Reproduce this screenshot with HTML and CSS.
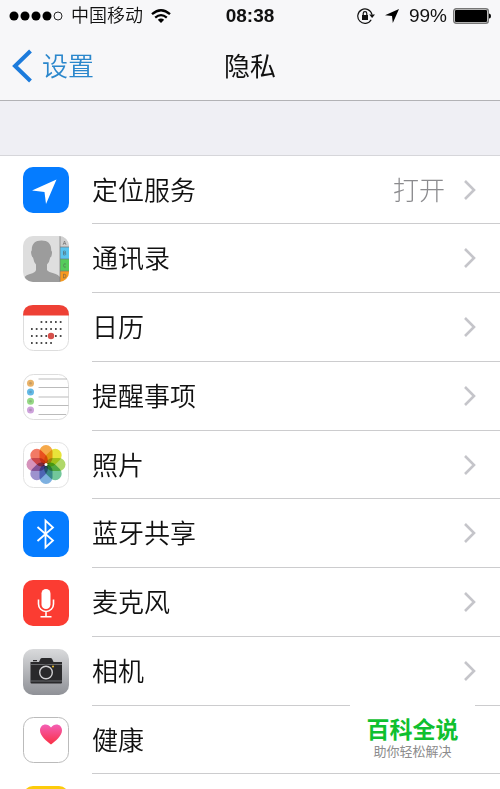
FILE: index.html
```html
<!DOCTYPE html>
<html lang="zh-CN">
<head>
<meta charset="utf-8">
<meta name="viewport" content="width=device-width, initial-scale=1">
<title>隐私</title>
<link rel="stylesheet" href="styles.css">
</head>
<body>
<div class="screen">
  <header class="top">
    <div class="status">
      <div class="status-left">
        <svg class="signal" width="54" height="10" viewBox="0 0 54 10" aria-hidden="true">
          <circle cx="5" cy="5" r="4.5"/><circle cx="16" cy="5" r="4.5"/><circle cx="27" cy="5" r="4.5"/><circle cx="38" cy="5" r="4.5"/>
          <circle cx="49" cy="5" r="4" fill="none" stroke="#111" stroke-width="0.9"/>
        </svg>
        <span class="carrier">中国移动</span>
        <svg width="20" height="14" viewBox="0 0 20 14" fill="none" stroke="#000" stroke-width="2.3" aria-hidden="true">
          <path d="M1 5.2Q10-2.8 19 5.2M4.2 8.6Q10 3.6 15.8 8.6"/>
          <path d="M6.8 10.8Q10 8 13.2 10.8L10 14Z" fill="#000" stroke="none"/>
        </svg>
      </div>
      <time class="clock">08:38</time>
      <div class="status-right">
        <svg width="18" height="16" viewBox="0 0 18 16" fill="none" stroke="#111" aria-hidden="true">
          <path d="M14.2 11.8A7.2 7.2 0 1 1 15 6.6" stroke-width="1.2"/>
          <path d="M12.2 6.6H18L15.1 10Z" fill="#111" stroke="none"/>
          <path d="M5 7H11V12H5Z" fill="#111" stroke="none"/>
          <path d="M6.2 7V5.4a1.8 1.8 0 0 1 3.6 0V7" stroke-width="1.2"/>
        </svg>
        <svg class="arrow" width="14" height="14" viewBox="0 0 14 14" aria-hidden="true"><path d="M14 0 7.8 14 7 7 0 6.2Z"/></svg>
        <span class="percent">99%</span>
        <svg width="38" height="16" viewBox="0 0 38 16" aria-hidden="true">
          <rect x="0.7" y="0.7" width="34.6" height="14.6" rx="2.5" fill="#eee" stroke="#777" stroke-width="1.4"/>
          <rect x="2" y="2" width="32" height="12" rx="1"/>
          <path d="M36 5.5q2 0 2 2.5t-2 2.5Z"/>
        </svg>
      </div>
    </div>
    <nav class="navbar">
      <button class="back" type="button">
        <svg width="20" height="34" viewBox="0 0 20 34" fill="none" stroke="#1c7bdc" stroke-width="4" aria-hidden="true"><path d="M18.5 2 3 17l15.5 15"/></svg>
        <span class="back-text">设置</span>
      </button>
      <h1 class="title">隐私</h1>
    </nav>
  </header>

  <main class="content">
    <ul class="list">
      <li class="row">
        <svg class="icon" viewBox="0 0 46 46" aria-hidden="true"><rect width="46" height="46" rx="10" fill="#057cff"/><path d="M33.5 12.5 23 37 21.500 25 9 23.500Z" fill="#fff"/></svg>
        <a class="link" href="#location"><span class="label">定位服务</span><span class="value">打开</span><svg class="chevron" viewBox="0 0 14 22" aria-hidden="true"><path d="m2 2 9 9-9 9"/></svg></a>
      </li>
      <li class="row">
        <svg class="icon" viewBox="0 0 46 46" aria-hidden="true">
          <clipPath id="tile"><rect width="46" height="46" rx="10"/></clipPath>
          <g clip-path="url(#tile)">
            <rect width="46" height="46" fill="#dedede"/>
            <path d="M18.500 4.500C12 4.500 8.500 8 8.800 14.500Q7.500 15 8.500 19q.5 2.300 1.500 2.500Q10.800 26 13 28.500V34q-.5 2.500-6 4-4.500 1-6 4V46H37V41q-2-2.500-5-3.300-7-1.700-8-3.700V28.500q2.500-2.500 3.200-7 1.300-.5 1.500-2.500.8-4-.5-4.500C28.500 8 25 4.500 18.500 4.500Z" fill="#9c9c9c"/>
            <rect x="37" width="9" height="11" fill="#d0d0d0"/>
            <rect x="37" y="11" width="9" height="12" fill="#5bc4ef"/>
            <rect x="37" y="23" width="9" height="12" fill="#56cc5b"/>
            <rect x="37" y="35" width="9" height="11" fill="#f79a1e"/>
            <path d="M37 0V46M37 11H46M37 23H46M37 35H46" stroke="#777" stroke-width="0.7"/>
            <g fill="none" stroke="#555" stroke-opacity=".6" stroke-width="0.8">
              <path d="m40 9 1.500-4L43 9M40.500 7.500h2M40.500 15v4h1.200q1.200 0 1.200-1t-1.200-1H40.500h1q1.200 0 1.200-1t-1.200-1ZM43 28q-2.500-1-2.500 1.500T43 31M40.500 38v4q2.500 0 2.500-2t-2.500-2Z"/>
            </g>
          </g>
        </svg>
        <a class="link" href="#contacts"><span class="label">通讯录</span><svg class="chevron" viewBox="0 0 14 22" aria-hidden="true"><path d="m2 2 9 9-9 9"/></svg></a>
      </li>
      <li class="row">
        <svg class="icon" viewBox="0 0 46 46" aria-hidden="true">
          <rect x=".5" y=".5" width="45" height="45" rx="10" fill="#fff" stroke="#ddd"/>
          <path d="M0 10.500Q0 0 10 0H36Q46 0 46 10.500Z" fill="#ee4035"/>
          <g stroke="#111" stroke-width="1.700" stroke-dasharray="1.700 3.100">
            <path d="M17.600 17H38.600M8 24H38.600M8 31H38.600M8 38H29"/>
          </g>
          <circle cx="28" cy="31" r="3.200" fill="#d5504b"/>
        </svg>
        <a class="link" href="#calendar"><span class="label">日历</span><svg class="chevron" viewBox="0 0 14 22" aria-hidden="true"><path d="m2 2 9 9-9 9"/></svg></a>
      </li>
      <li class="row">
        <svg class="icon" viewBox="0 0 46 46" aria-hidden="true">
          <rect x=".5" y=".5" width="45" height="45" rx="10" fill="#fff" stroke="#ddd"/>
          <path d="M15.500 5H44M15.500 13.500H45.500M15.500 23H45.500M15.500 31.500H45.500M15.500 40.500H43" stroke="#bbb"/>
          <circle cx="7.500" cy="9.200" r="3.500" fill="#e9b268"/><circle cx="7.500" cy="18" r="3.500" fill="#63b9e6"/><circle cx="7.500" cy="27.300" r="3.500" fill="#96d985"/><circle cx="7.500" cy="36" r="3.500" fill="#cea2dc"/>
          <g fill="#555" fill-opacity=".25"><circle cx="7.500" cy="9.200" r="1.300"/><circle cx="7.500" cy="18" r="1.300"/><circle cx="7.500" cy="27.300" r="1.300"/><circle cx="7.500" cy="36" r="1.300"/></g>
        </svg>
        <a class="link" href="#reminders"><span class="label">提醒事项</span><svg class="chevron" viewBox="0 0 14 22" aria-hidden="true"><path d="m2 2 9 9-9 9"/></svg></a>
      </li>
      <li class="row">
        <svg class="icon" viewBox="0 0 46 46" aria-hidden="true">
          <rect x=".5" y=".5" width="45" height="45" rx="10" fill="#fff" stroke="#e2e2e2"/>
          <g class="petals">
            <rect x="16.500" y="3" width="13" height="19.500" rx="6.500" fill="#f6a94a"/>
            <rect x="16.500" y="3" width="13" height="19.500" rx="6.500" fill="#e8e43a" transform="rotate(45 23 22.500)"/>
            <rect x="16.500" y="3" width="13" height="19.500" rx="6.500" fill="#b0d86a" transform="rotate(90 23 22.500)"/>
            <rect x="16.500" y="3" width="13" height="19.500" rx="6.500" fill="#72c79a" transform="rotate(135 23 22.500)"/>
            <rect x="16.500" y="3" width="13" height="19.500" rx="6.500" fill="#7db0e0" transform="rotate(180 23 22.500)"/>
            <rect x="16.500" y="3" width="13" height="19.500" rx="6.500" fill="#9d92ce" transform="rotate(225 23 22.500)"/>
            <rect x="16.500" y="3" width="13" height="19.500" rx="6.500" fill="#d693bb" transform="rotate(270 23 22.500)"/>
            <rect x="16.500" y="3" width="13" height="19.500" rx="6.500" fill="#f27a65" transform="rotate(315 23 22.500)"/>
          </g>
          <circle cx="23" cy="22.500" r="1.500" fill="#fff"/>
        </svg>
        <a class="link" href="#photos"><span class="label">照片</span><svg class="chevron" viewBox="0 0 14 22" aria-hidden="true"><path d="m2 2 9 9-9 9"/></svg></a>
      </li>
      <li class="row">
        <svg class="icon" viewBox="0 0 46 46" aria-hidden="true"><rect width="46" height="46" rx="10" fill="#057cff"/><path d="M14.500 16 30 29.500 22.500 36.500V9.500L30 16.500 14.500 30" fill="none" stroke="#fff" stroke-width="1.800"/></svg>
        <a class="link" href="#bluetooth"><span class="label">蓝牙共享</span><svg class="chevron" viewBox="0 0 14 22" aria-hidden="true"><path d="m2 2 9 9-9 9"/></svg></a>
      </li>
      <li class="row">
        <svg class="icon" viewBox="0 0 46 46" aria-hidden="true"><rect width="46" height="46" rx="10" fill="#fb3c32"/><rect x="18.500" y="9" width="9" height="20" rx="4.500" fill="#fff"/><path d="M15.500 19.500V24a7.500 7.500 0 0 0 15 0V19.500M23 31.500V36.500M17.500 36.700H28.500" fill="none" stroke="#fff" stroke-width="1.600"/></svg>
        <a class="link" href="#microphone"><span class="label">麦克风</span><svg class="chevron" viewBox="0 0 14 22" aria-hidden="true"><path d="m2 2 9 9-9 9"/></svg></a>
      </li>
      <li class="row">
        <svg class="icon" viewBox="0 0 46 46" aria-hidden="true">
          <linearGradient id="metal" x2="0" y2="1"><stop stop-color="#d9dadc"/><stop offset="1" stop-color="#8f9197"/></linearGradient>
          <rect width="46" height="46" rx="10" fill="url(#metal)"/>
          <path d="M7.500 13H16l1.500-3.200Q18 9 19 9h8.500q1 0 1.500.8L30.500 13H39V33.500q0 1-1 1H8.500q-1 0-1-1ZM10 11h4v1.200h-4Z" fill="#29292b"/>
          <path d="M7.500 15.500H39M7.500 32H39" stroke="#85868a" stroke-width=".7"/>
          <circle cx="23" cy="23.500" r="8" fill="#29292b"/><circle cx="23" cy="23.500" r="6.300" fill="none" stroke="#d0d0d2" stroke-width="1.400"/>
          <circle cx="30" cy="17.500" r="1" fill="#f3c52c"/>
        </svg>
        <a class="link" href="#camera"><span class="label">相机</span><svg class="chevron" viewBox="0 0 14 22" aria-hidden="true"><path d="m2 2 9 9-9 9"/></svg></a>
      </li>
      <li class="row">
        <svg class="icon" viewBox="0 0 46 46" aria-hidden="true">
          <linearGradient id="heart" x2="0" y2="1"><stop stop-color="#f45fb5"/><stop offset="1" stop-color="#fa3044"/></linearGradient>
          <rect x=".5" y=".5" width="45" height="45" rx="10" fill="#fff" stroke="#bbb"/>
          <path d="M28 27.500C24 24.500 17 19 17 13.500 17 7 24.500 5.500 28 10.500 31.500 5.500 39 7 39 13.500 39 19 32 24.500 28 27.500Z" fill="url(#heart)"/>
        </svg>
        <a class="link" href="#health"><span class="label">健康</span></a>
      </li>
      <li class="row">
        <svg class="icon" viewBox="0 0 46 46" aria-hidden="true"><rect width="46" height="46" rx="10" fill="#fccb0b"/></svg>
      </li>
    </ul>
  </main>

  <aside class="badge">
    <strong class="badge-name">百科全说</strong>
    <span class="badge-tag">助你轻松解决</span>
  </aside>
</div>
</body>
</html>
```
FILE: styles.css
```css
* { box-sizing: border-box; }

body {
  margin: 0;
  background: #fff;
  color: #111;
  font-family: "Liberation Sans", "Noto Sans CJK SC", sans-serif;
}

.screen {
  position: relative;
  display: flex;
  flex-direction: column;
  height: 100vh;
  overflow: hidden;
}

.top {
  flex: none;
  background: #f7f7f9;
  border-bottom: 1px solid #b2b2b5;
}

.status,
.navbar {
  display: grid;
  grid-template-columns: 1fr auto 1fr;
  align-items: center;
}

.status {
  height: 32px;
  padding: 0 9px;
  font-size: 19px;
}

.status-left,
.status-right {
  display: flex;
  align-items: center;
}

.status-left { gap: 8px; }
.status-right { justify-content: flex-end; gap: 6px; }
.arrow { margin: 0 4px; }

.carrier {
  font-size: 18px;
  font-weight: 350;
  line-height: 24px;
}

.clock {
  font-weight: bold;
  line-height: 24px;
}

.percent { line-height: 24px; }

.navbar {
  height: 68px;
  padding: 0 12px;
}

.back {
  display: flex;
  align-items: center;
  gap: 10px;
  justify-self: start;
  padding: 0;
  border: 0;
  background: none;
  color: #2b87cc;
  font-family: inherit;
  font-size: 26px;
  font-weight: 350;
  line-height: 36px;
}

.title {
  margin: 0;
  font-size: 26px;
  font-weight: 400;
  line-height: 36px;
}

.back-text,
.title,
.label,
.value { padding-top: 2px; }

.content {
  flex: 1;
  min-height: 0;
  padding-top: 54px;
  background: #efeff4;
}

.list {
  margin: 0;
  padding: 0;
  list-style: none;
  background: #fff;
  border-top: 1px solid #d6d6da;
}

.row {
  display: flex;
  align-items: center;
  gap: 23px;
  height: 69px;
  padding-left: 23px;
}

.row:nth-child(4n + 1) { height: 68px; }

.icon {
  flex: none;
  width: 46px;
  height: 46px;
}

.petals rect { mix-blend-mode: multiply; }

.link {
  display: flex;
  flex: 1;
  align-items: center;
  align-self: stretch;
  padding-right: 23px;
  border-bottom: 1px solid #ccccce;
  color: inherit;
  font-size: 26px;
  font-weight: 350;
  line-height: 36px;
  text-decoration: none;
}

.label { flex: 1; }

.value {
  margin-right: 18px;
  color: #8b8b8e;
  font-weight: 300;
}

.chevron {
  width: 14px;
  height: 22px;
  fill: none;
  stroke: #c5c5ca;
  stroke-width: 2.6px;
}

.badge {
  position: absolute;
  right: 25px;
  bottom: 18px;
  display: flex;
  flex-direction: column;
  align-items: center;
  width: 125px;
  padding: 12px 0 10px;
  background: #fff;
}

.badge-name {
  color: #0fc02f;
  font-size: 23px;
  font-weight: bold;
  line-height: 26px;
}

.badge-tag {
  color: #8c8c8c;
  font-size: 13px;
  line-height: 18px;
}
```
